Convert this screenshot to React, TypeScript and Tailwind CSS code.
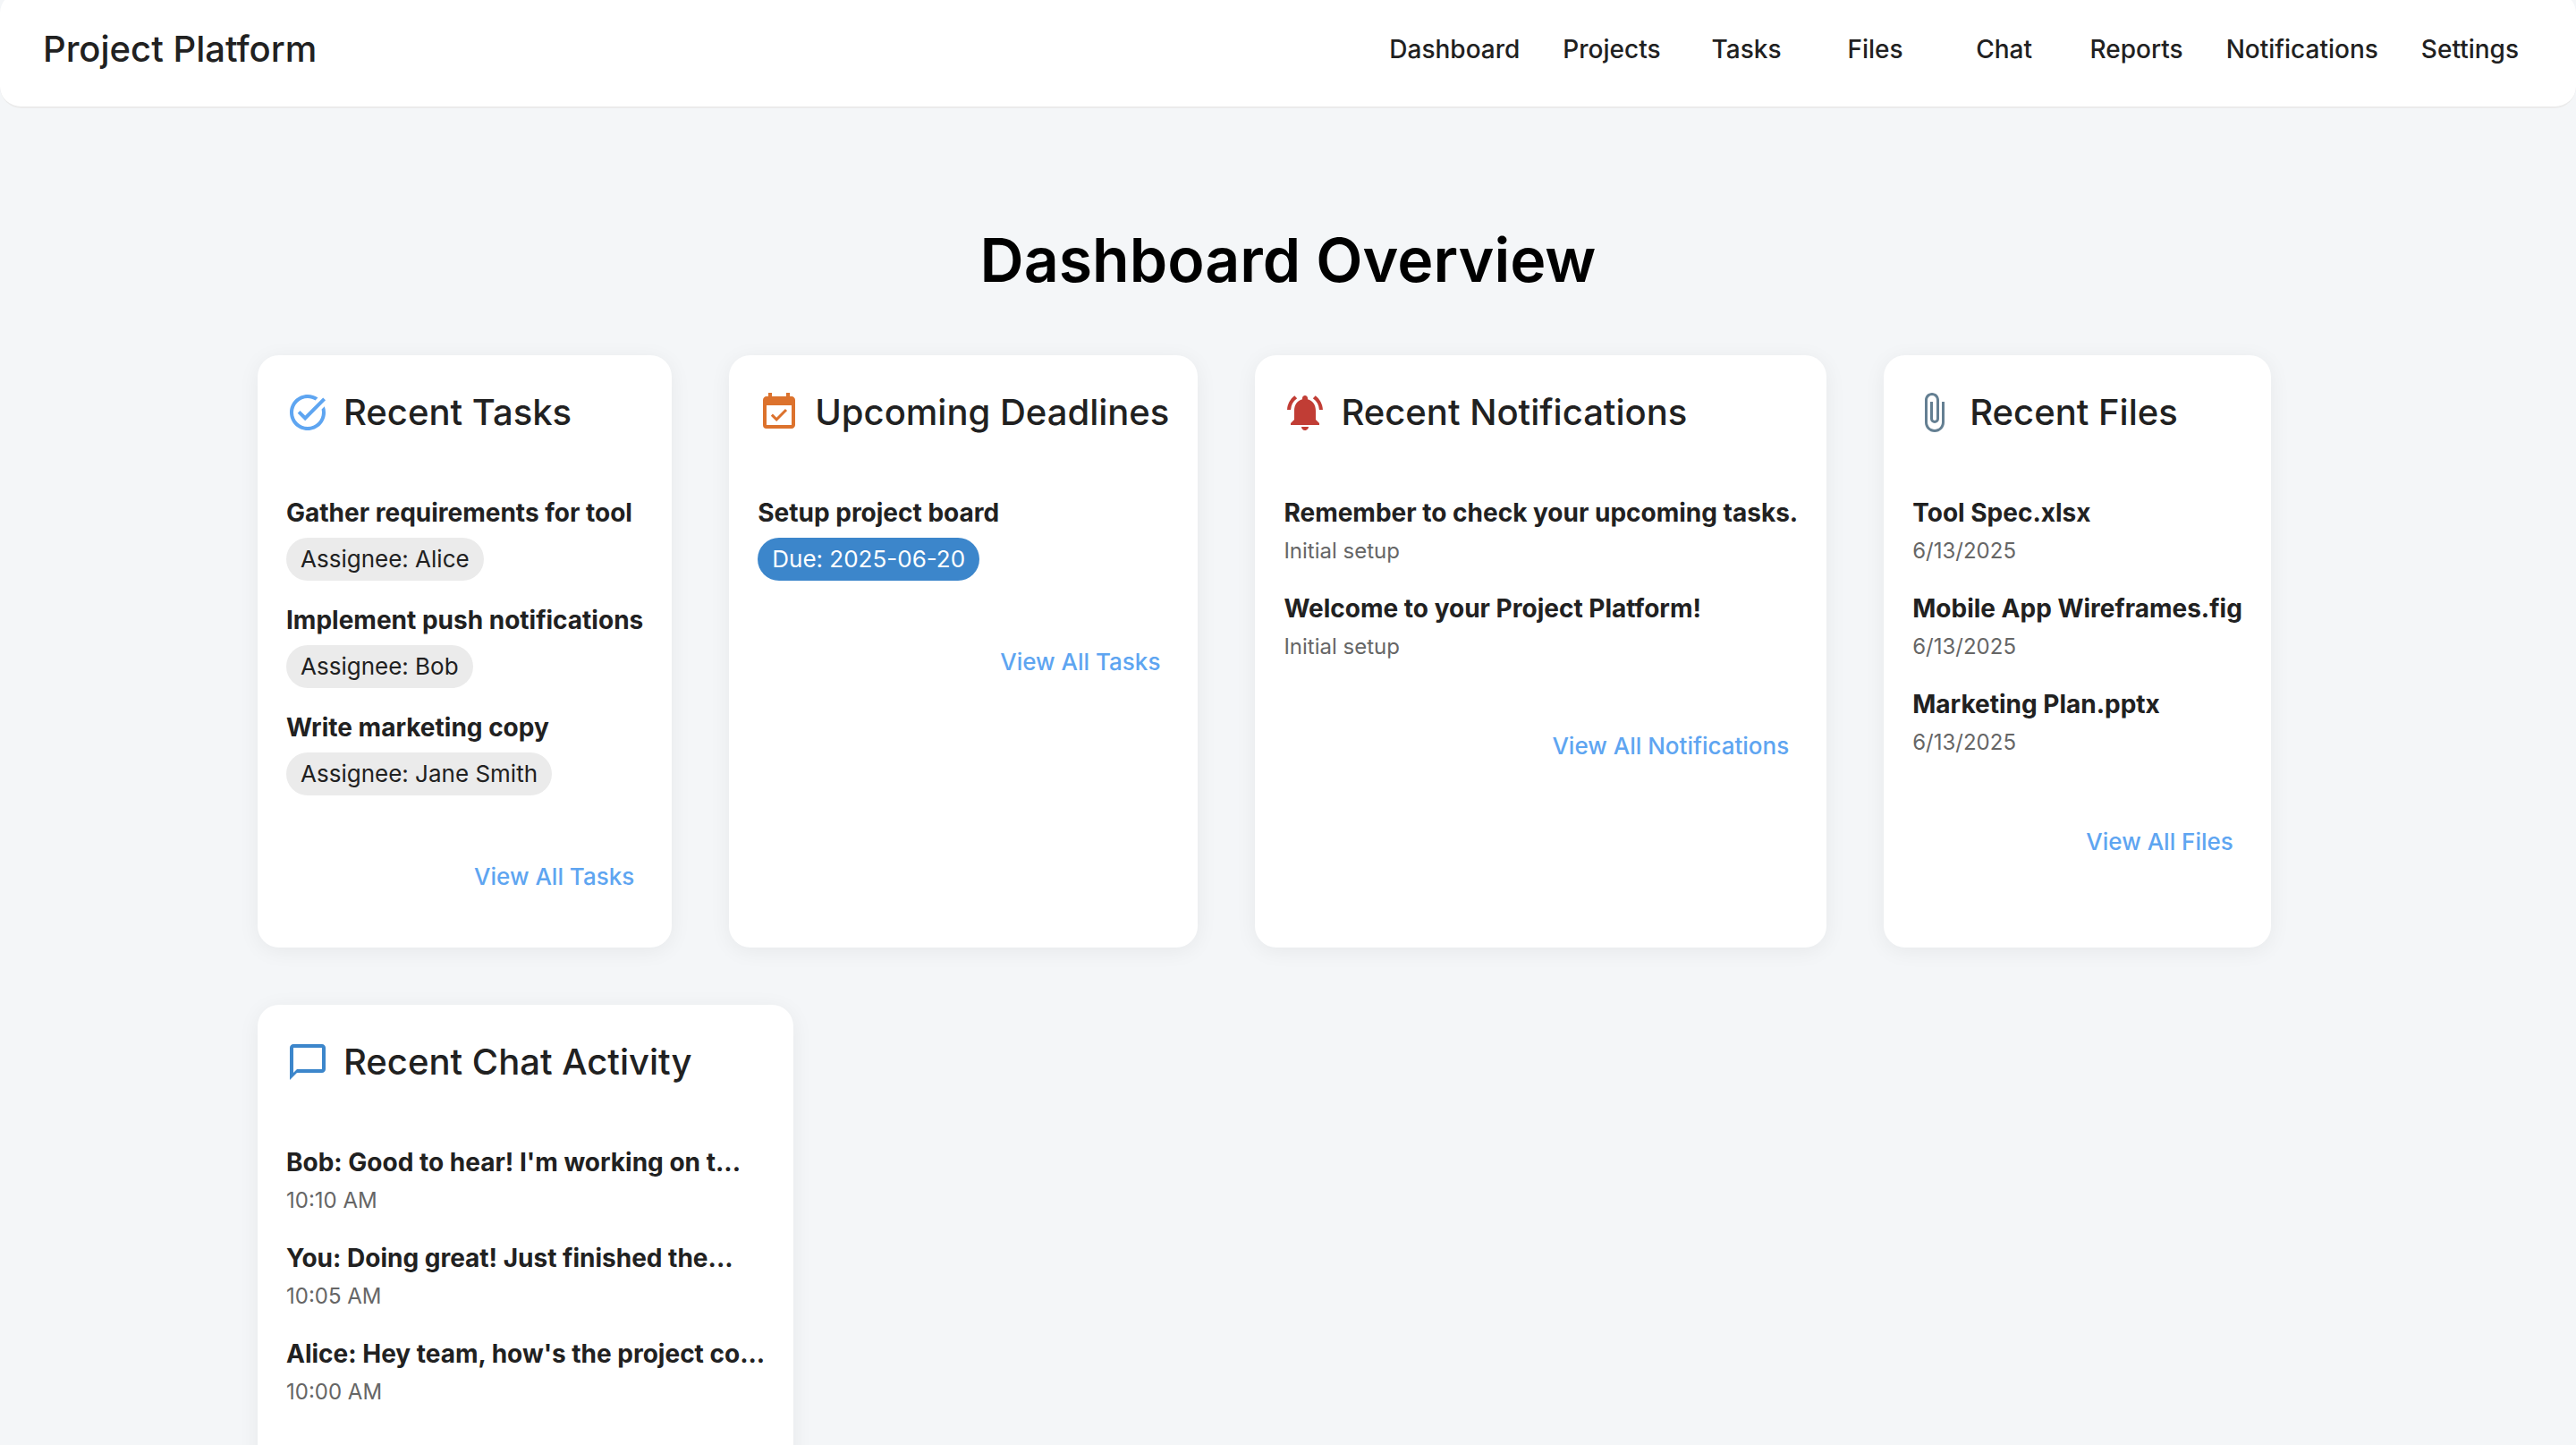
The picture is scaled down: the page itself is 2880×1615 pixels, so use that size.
import type { ReactNode } from 'react'
import type { IconType } from 'react-icons'
import {
  MdAttachFile,
  MdChatBubbleOutline,
  MdEventAvailable,
  MdNotificationsActive,
  MdTaskAlt,
} from 'react-icons/md'

const navLinks = ['Dashboard', 'Projects', 'Tasks', 'Files', 'Chat', 'Reports', 'Notifications', 'Settings']

const tasks = [
  { title: 'Gather requirements for tool', assignee: 'Alice' },
  { title: 'Implement push notifications', assignee: 'Bob' },
  { title: 'Write marketing copy', assignee: 'Jane Smith' },
]

const deadlines = [{ title: 'Setup project board', due: '2025-06-20' }]

const notifications = [
  { title: 'Remember to check your upcoming tasks.', detail: 'Initial setup' },
  { title: 'Welcome to your Project Platform!', detail: 'Initial setup' },
]

const files = [
  { title: 'Tool Spec.xlsx', detail: '6/13/2025' },
  { title: 'Mobile App Wireframes.fig', detail: '6/13/2025' },
  { title: 'Marketing Plan.pptx', detail: '6/13/2025' },
]

const messages = [
  { title: "Bob: Good to hear! I'm working on t...", detail: '10:10 AM' },
  { title: 'You: Doing great! Just finished the...', detail: '10:05 AM' },
  { title: "Alice: Hey team, how's the project co...", detail: '10:00 AM' },
]

interface CardProps {
  icon: IconType
  iconClass: string
  title: string
  linkText?: string
  children: ReactNode
}

function Card({ icon: Icon, iconClass, title, linkText, children }: CardProps) {
  return (
    <section className="rounded-3xl bg-white px-8 pt-8 pb-12 shadow-[0_4px_24px_rgba(0,0,0,0.06)]">
      <div className="flex items-center gap-4">
        <Icon size={48} className={iconClass} />
        <h2 className="text-[40px] leading-16 font-medium">{title}</h2>
      </div>
      <ul className="mt-[58px] flex flex-col gap-[22px]">{children}</ul>
      <div className="mt-15 flex h-[62px] justify-end">
        {linkText && (
          <a href="#" className="px-[10px] py-2 text-[26px] leading-[46px] font-medium text-[#5ea5f1]">
            {linkText}
          </a>
        )}
      </div>
    </section>
  )
}

function Item({ title, children }: { title: string; children: ReactNode }) {
  return (
    <li className="flex flex-col items-start">
      <span className="text-[28px] leading-11 font-bold whitespace-nowrap">{title}</span>
      {children}
    </li>
  )
}

function Chip({ className, children }: { className: string; children: ReactNode }) {
  return (
    <span className={`mt-[6px] flex h-12 items-center rounded-full px-4 text-[26px] leading-12 ${className}`}>
      {children}
    </span>
  )
}

function Detail({ children }: { children: ReactNode }) {
  return <span className="text-2xl leading-[41px] text-[#666666]">{children}</span>
}

export default function App() {
  return (
    <div className="min-h-screen bg-[#f4f6f8] pb-16 font-['Inter',sans-serif] text-[#212121]">
      {/* Top bar, tucked under the window edge */}
      <div className="overflow-hidden">
        <header className="-mt-[9px] flex h-[130px] items-center justify-between rounded-3xl border-b-2 border-[#ebebeb] bg-white px-12">
          <span className="text-[40px] leading-16 font-medium">Project Platform</span>
          <nav className="flex gap-4">
            {navLinks.map((label) => (
              <a key={label} href="#" className="min-w-32 px-4 py-3 text-center text-[28px] leading-12 font-medium">
                {label}
              </a>
            ))}
          </nav>
        </header>
      </div>

      <main className="mx-auto w-4/5 pt-32">
        <h1 className="mb-[66px] text-center text-[68px] leading-[82px] font-semibold text-black">Dashboard Overview</h1>
        <div className="flex flex-wrap gap-16">
          <Card icon={MdTaskAlt} iconClass="text-[#5ea5f1]" title="Recent Tasks" linkText="View All Tasks">
            {tasks.map((task) => (
              <Item key={task.title} title={task.title}>
                <Chip className="bg-[#ebebeb]">Assignee: {task.assignee}</Chip>
              </Item>
            ))}
          </Card>

          <Card icon={MdEventAvailable} iconClass="text-[#dc722d]" title="Upcoming Deadlines" linkText="View All Tasks">
            {deadlines.map((task) => (
              <Item key={task.title} title={task.title}>
                <Chip className="bg-[#3c86cb] text-white">Due: {task.due}</Chip>
              </Item>
            ))}
          </Card>

          <Card icon={MdNotificationsActive} iconClass="text-[#c13d35]" title="Recent Notifications" linkText="View All Notifications">
            {notifications.map((note) => (
              <Item key={note.title} title={note.title}>
                <Detail>{note.detail}</Detail>
              </Item>
            ))}
          </Card>

          <Card icon={MdAttachFile} iconClass="text-[#647f92]" title="Recent Files" linkText="View All Files">
            {files.map((file) => (
              <Item key={file.title} title={file.title}>
                <Detail>{file.detail}</Detail>
              </Item>
            ))}
          </Card>

          <Card icon={MdChatBubbleOutline} iconClass="text-[#3c86cb]" title="Recent Chat Activity">
            {messages.map((message) => (
              <Item key={message.title} title={message.title}>
                <Detail>{message.detail}</Detail>
              </Item>
            ))}
          </Card>
        </div>
      </main>
    </div>
  )
}
